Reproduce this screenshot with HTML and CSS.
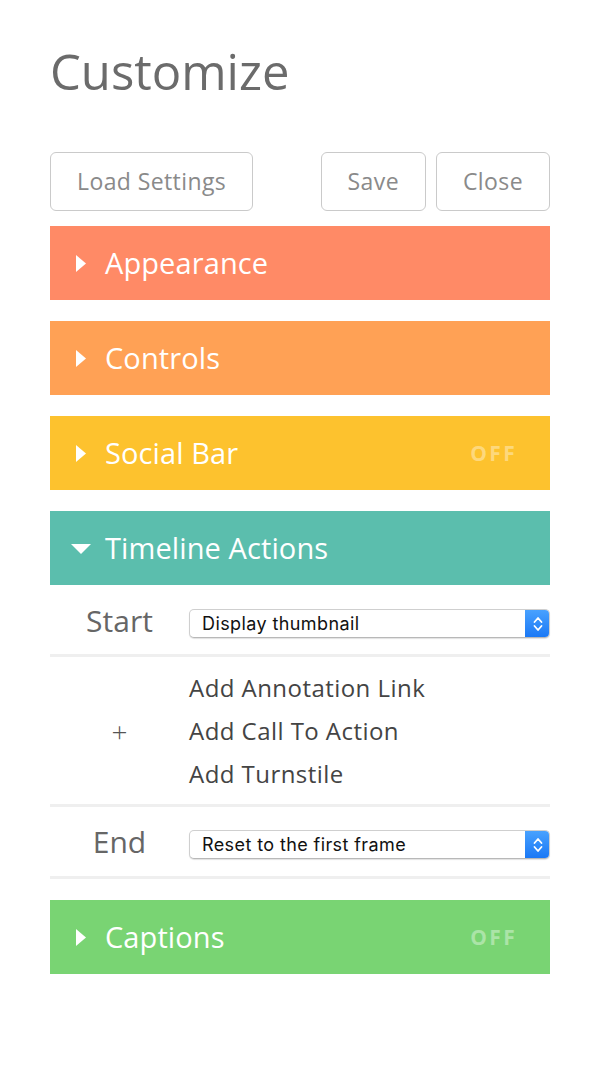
FILE: index.html
```html
<!DOCTYPE html>
<html lang="en">
<head>
<meta charset="utf-8">
<title>Customize</title>
<link rel="stylesheet" href="styles.css">
</head>
<body>
<div class="page">
  <h1 class="title">Customize</h1>
  <div class="toolbar">
    <button class="btn">Load Settings</button>
    <div class="btn-group">
      <button class="btn">Save</button>
      <button class="btn">Close</button>
    </div>
  </div>

  <div class="section bar-appearance">
    <span class="caret"><svg width="10" height="17" viewBox="0 0 10 17"><path d="M0 0 L10 8.5 L0 17 Z" fill="#fff"/></svg></span>
    <span class="bar-title">Appearance</span>
  </div>
  <div class="section bar-controls">
    <span class="caret"><svg width="10" height="17" viewBox="0 0 10 17"><path d="M0 0 L10 8.5 L0 17 Z" fill="#fff"/></svg></span>
    <span class="bar-title">Controls</span>
  </div>
  <div class="section bar-social">
    <span class="caret"><svg width="10" height="17" viewBox="0 0 10 17"><path d="M0 0 L10 8.5 L0 17 Z" fill="#fff"/></svg></span>
    <span class="bar-title">Social Bar</span>
    <span class="off">OFF</span>
  </div>
  <div class="section bar-timeline open">
    <span class="caret"><svg width="20" height="10" viewBox="0 0 20 10"><path d="M0 0 L20 0 L10 10 Z" fill="#fff"/></svg></span>
    <span class="bar-title">Timeline Actions</span>
  </div>

  <div class="timeline-body">
    <div class="row row-select">
      <div class="row-label">Start</div>
      <div class="select">
        <span class="select-text">Display thumbnail</span>
        <span class="stepper"><svg width="10" height="18" viewBox="0 0 10 18"><path d="M1.5 7 L5 3 L8.5 7 M1.5 11 L5 15 L8.5 11" fill="none" stroke="#fff" stroke-width="1.8" stroke-linecap="round" stroke-linejoin="round"/></svg></span>
      </div>
    </div>
    <div class="row row-add">
      <div class="row-label plus">+</div>
      <ul class="add-list">
        <li>Add Annotation Link</li>
        <li>Add Call To Action</li>
        <li>Add Turnstile</li>
      </ul>
    </div>
    <div class="row row-select row-end">
      <div class="row-label">End</div>
      <div class="select">
        <span class="select-text">Reset to the first frame</span>
        <span class="stepper"><svg width="10" height="18" viewBox="0 0 10 18"><path d="M1.5 7 L5 3 L8.5 7 M1.5 11 L5 15 L8.5 11" fill="none" stroke="#fff" stroke-width="1.8" stroke-linecap="round" stroke-linejoin="round"/></svg></span>
      </div>
    </div>
  </div>

  <div class="section bar-captions">
    <span class="caret"><svg width="10" height="17" viewBox="0 0 10 17"><path d="M0 0 L10 8.5 L0 17 Z" fill="#fff"/></svg></span>
    <span class="bar-title">Captions</span>
    <span class="off">OFF</span>
  </div>
</div>
</body>
</html>
```

FILE: styles.css
```css
html, body {
  margin: 0;
  padding: 0;
  background: #fff;
}

body {
  font-family: "Open Sans", "Liberation Sans", sans-serif;
}

.page {
  width: 500px;
  padding: 41px 50px 0;
}

.title {
  margin: 0;
  font-size: 49px;
  line-height: 60px;
  font-weight: 400;
  color: #6b6b6b;
  letter-spacing: 0;
}

.toolbar {
  display: flex;
  justify-content: space-between;
  margin-top: 51px;
}

.btn-group {
  display: flex;
  gap: 10px;
}

.btn {
  height: 59px;
  padding: 0 26px;
  border: 1px solid #cacaca;
  border-radius: 6px;
  background: #fff;
  font-family: "Open Sans", "Liberation Sans", sans-serif;
  font-size: 23px;
  color: #8a8a8a;
  line-height: 1;
  letter-spacing: 0.4px;
}

.section {
  display: flex;
  align-items: center;
  height: 74px;
  padding: 0 33px 0 21px;
  margin-top: 21px;
  color: #fff;
}

.toolbar + .section {
  margin-top: 15px;
}

.caret {
  display: flex;
  justify-content: center;
  align-items: center;
  width: 20px;
  margin-right: 14px;
  margin-top: 1px;
}

.caret svg {
  display: block;
}

.bar-title {
  flex: 1;
  font-size: 29px;
  line-height: 1;
  margin-top: -2px;
  letter-spacing: 0.1px;
}

.off {
  font-size: 21px;
  font-weight: 700;
  letter-spacing: 2.3px;
  color: rgba(255, 255, 255, 0.38);
  margin-top: -1px;
}

.bar-appearance { background: #ff8a66; }
.bar-controls   { background: #ffa155; }
.bar-social     { background: #fdc22e; }
.bar-timeline   { background: #5bbead; }
.bar-captions   { background: #79d473; }

.timeline-body {
  display: flex;
  flex-direction: column;
}

.row {
  display: flex;
  align-items: center;
  border-bottom: 3px solid #efefef;
}

.row-select {
  padding: 24px 0 16px;
}

.row-end {
  padding: 23px 0 17px;
}

.row-label {
  width: 139px;
  text-align: center;
  font-size: 30px;
  color: #666;
  line-height: 23px;
  margin-bottom: 6px;
}

.plus {
  font-size: 28px;
  line-height: 28px;
  font-weight: 300;
  color: #555;
  margin-bottom: 0;
}

.select {
  flex: 1;
  display: flex;
  align-items: center;
  height: 29px;
  box-sizing: border-box;
  border: 1px solid #cfcfcf;
  border-bottom-color: #b8b8b8;
  border-radius: 5px;
  background: #fff;
  box-shadow: 0 1px 1px rgba(0, 0, 0, 0.12);
  overflow: hidden;
}

.select-text {
  flex: 1;
  padding-left: 12px;
  font-family: "Inter", "Liberation Sans", sans-serif;
  font-size: 18px;
  line-height: 27px;
  color: #111;
  letter-spacing: 0.4px;
}

.stepper {
  align-self: stretch;
  width: 25px;
  margin: -1px -1px -1px 0;
  display: flex;
  justify-content: center;
  align-items: center;
  background: linear-gradient(#4aa3ff, #1977f5);
  border-radius: 0 5px 5px 0;
}

.row-add {
  padding: 9px 0 9px;
}

.add-list {
  list-style: none;
  margin: 0;
  padding: 0;
  font-size: 24px;
  line-height: 43px;
  color: #444;
  letter-spacing: 0.45px;
}

.timeline-body + .section {
  margin-top: 21px;
}
```
